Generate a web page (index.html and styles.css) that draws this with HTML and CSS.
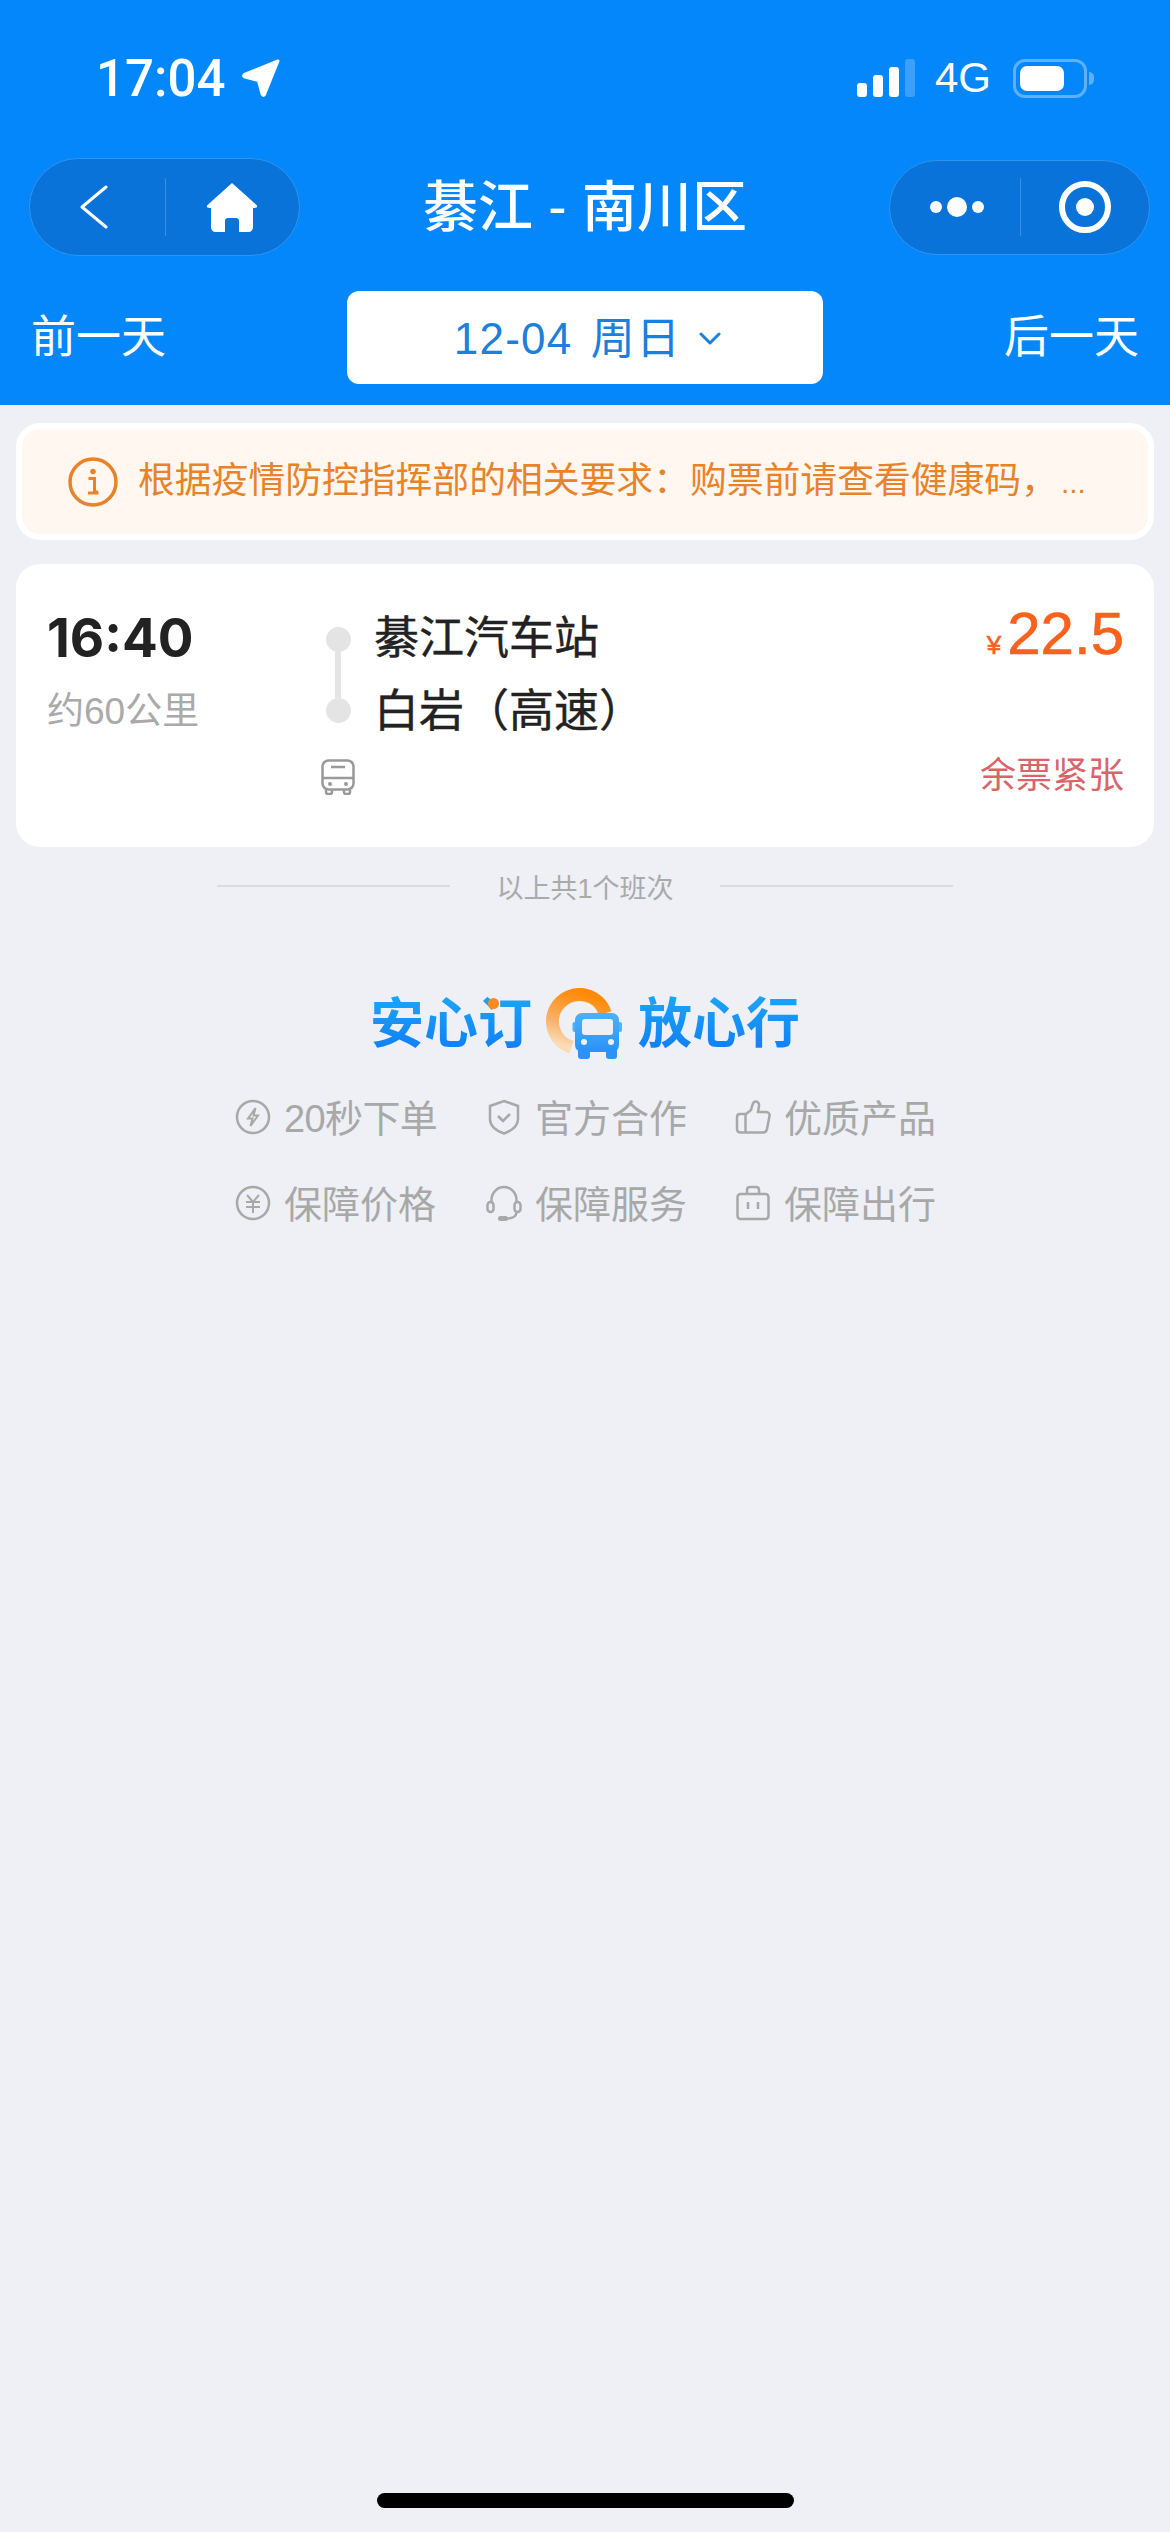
FILE: index.html
```html
<!DOCTYPE html>
<html lang="zh-CN">
<head>
  <meta charset="UTF-8">
  <title>綦江 - 南川区</title>
  <link rel="stylesheet" href="styles.css">
</head>
<body>
  <div class="page">
    <header class="top">
      <!-- Status bar -->
      <div class="status">
        <div class="clock">17:04</div>
        <svg class="locate" viewBox="0 0 40 40"><path d="M37 3 L23.5 36.5 Q22 38.500 21 36 L17.500 22.500 L4 19 Q1.500 18 3.500 16.500 Z" fill="#fff" stroke="#fff" stroke-width="3" stroke-linejoin="round"/></svg>
        <div class="signal">
          <span class="bar bar-1"></span>
          <span class="bar bar-2"></span>
          <span class="bar bar-3"></span>
          <span class="bar bar-4"></span>
        </div>
        <div class="net">4G</div>
        <div class="battery"><span class="battery-fill"></span></div>
        <span class="battery-nub"></span>
      </div>

      <!-- Nav bar -->
      <div class="nav">
        <div class="pill pill-left">
          <div class="pill-cell">
            <svg class="icon-back" viewBox="0 0 28 44"><path d="M26 2 L2 22 L26 42" fill="none" stroke="#fff" stroke-width="3" stroke-linecap="round" stroke-linejoin="round"/></svg>
          </div>
          <div class="pill-cell pill-cell-line">
            <svg class="icon-home" viewBox="0 0 52 50"><path d="M26 1 L50.500 23 Q52.500 26 48 26 H47 V45 Q47 50 42 50 H33 V39 Q33 36 30 36 H22 Q19 36 19 39 V50 H10 Q5 50 5 45 V26 H4 Q-.5 26 1.500 23 Z" fill="#fff"/></svg>
          </div>
        </div>
        <h1 class="title">綦江 - 南川区</h1>
        <div class="pill pill-right">
          <div class="pill-cell">
            <div class="dots"><span class="dot"></span><span class="dot dot-big"></span><span class="dot"></span></div>
          </div>
          <div class="pill-cell pill-cell-line">
            <div class="target"><span class="target-core"></span></div>
          </div>
        </div>
      </div>

      <!-- Date switcher -->
      <div class="dates">
        <div class="day-link">前一天</div>
        <div class="date-box">
          <span class="date-label">12-04 周日</span>
          <svg class="date-arrow" viewBox="0 0 22 14"><path d="M2 2 L11 11 L20 2" fill="none" stroke="#1c7fd9" stroke-width="3" stroke-linecap="round" stroke-linejoin="round"/></svg>
        </div>
        <div class="day-link day-link-next">后一天</div>
      </div>
    </header>

    <main class="content">
      <div class="notice">
        <svg class="notice-icon" viewBox="0 0 50 50">
          <circle cx="25" cy="25" r="23" fill="none" stroke="#e8832a" stroke-width="3.500"/>
          <circle cx="25" cy="14.500" r="2.800" fill="#e8832a"/>
          <path d="M20.500 21.500 H26.500 V35 H30 M20 36 H30.500" fill="none" stroke="#e8832a" stroke-width="3"/>
        </svg>
        <div class="notice-text">根据疫情防控指挥部的相关要求：购票前请查看健康码，<span class="notice-more">...</span></div>
      </div>

      <div class="trip">
        <div class="trip-time">
          <div class="depart">16:40</div>
          <div class="distance">约60公里</div>
        </div>
        <div class="trip-line">
          <div class="line-track">
            <span class="line-dot"></span>
            <span class="line-bar"></span>
            <span class="line-dot"></span>
          </div>
          <svg class="icon-bus" viewBox="0 0 34 36">
            <rect x="1.500" y="1.500" width="31" height="29" rx="6" fill="none" stroke="#999" stroke-width="2.500"/>
            <path d="M10 8 H24 M1.500 19 H32.500 M5 31 V33 Q5 35 7 35 H9 Q11 35 11 33 V31 M23 31 V33 Q23 35 25 35 H27 Q29 35 29 33 V31" fill="none" stroke="#999" stroke-width="2.500"/>
            <circle cx="9" cy="25" r="2" fill="#999"/>
            <circle cx="25" cy="25" r="2" fill="#999"/>
          </svg>
        </div>
        <div class="stations">
          <div class="station">綦江汽车站</div>
          <div class="station">白岩（高速）</div>
        </div>
        <div class="trip-side">
          <div class="price"><span class="yen">¥</span>22.5</div>
          <div class="stock">余票紧张</div>
        </div>
      </div>

      <div class="count">
        <span class="count-line"></span>
        <span class="count-text">以上共1个班次</span>
        <span class="count-line"></span>
      </div>

      <div class="brand">
        <div class="brand-text">安心订<span class="brand-dot"></span></div>
        <svg class="brand-logo" viewBox="0 0 76 72">
          <defs>
            <linearGradient id="ring" x1="0.600" y1="0" x2="0.300" y2="1">
              <stop offset="0" stop-color="#ff8a0a"/>
              <stop offset="0.600" stop-color="#f9b066"/>
              <stop offset="1" stop-color="#fbdcb8"/>
            </linearGradient>
            <linearGradient id="coach" x1="0" y1="0" x2="0" y2="1">
              <stop offset="0" stop-color="#4db2f7"/>
              <stop offset="1" stop-color="#2a92f8"/>
            </linearGradient>
          </defs>
          <path d="M59.200 25.200 A27 27 0 1 0 25.600 59.300" fill="none" stroke="url(#ring)" stroke-width="13"/>
          <rect x="26.500" y="34" width="4" height="10" rx="2" fill="#4db2f7"/>
          <rect x="72" y="34" width="4" height="10" rx="2" fill="#4db2f7"/>
          <rect x="29" y="25" width="44" height="39" rx="7" fill="url(#coach)"/>
          <rect x="36" y="31" width="31" height="16" rx="3" fill="#eef0f6"/>
          <rect x="32" y="60" width="12" height="11" rx="3" fill="#2a92f8"/>
          <rect x="60" y="60" width="11" height="11" rx="3" fill="#2a92f8"/>
          <circle cx="38" cy="54" r="3" fill="#eef0f6"/>
          <circle cx="65" cy="54" r="3" fill="#eef0f6"/>
        </svg>
        <div class="brand-text">放心行</div>
      </div>

      <div class="perks">
        <div class="perk">
          <svg class="perk-icon" viewBox="0 0 36 36">
            <circle cx="18" cy="18" r="16" class="ln"/>
            <path d="M20.500 9 L13 19.500 H17.500 L15.500 27 L23 16.500 H18.500 Z" class="ln-thin"/>
          </svg>
          <span class="perk-tight">20秒下单</span>
        </div>
        <div class="perk">
          <svg class="perk-icon" viewBox="0 0 36 36">
            <path d="M18 2 L32 7 V20 C32 27 25 32 18 34.500 C11 32 4 27 4 20 V7 Z" class="ln"/>
            <path d="M12 17 L17 22 L24 15" class="ln"/>
          </svg>
          <span>官方合作</span>
        </div>
        <div class="perk">
          <svg class="perk-icon" viewBox="0 0 36 36">
            <path d="M11 15 L16 11 C17 8 17 5 19 3 C22 1.500 24.500 4 24 7 L23 13 H31 C33.500 13 35 15 34.500 17 L32 30 C31.500 32.500 30 33.500 28 33.500 H6 C3 33.500 2 32.500 2 30 V18 C2 16 3 15 5 15 Z" class="ln"/>
            <path d="M10.500 15 V33" class="ln"/>
          </svg>
          <span>优质产品</span>
        </div>
        <div class="perk">
          <svg class="perk-icon" viewBox="0 0 36 36">
            <circle cx="18" cy="18" r="16" class="ln"/>
            <path d="M12 10 L18 17 L24 10 M11 17 H25 M11 22 H25 M18 17 V28" class="ln-thin"/>
          </svg>
          <span>保障价格</span>
        </div>
        <div class="perk">
          <svg class="perk-icon" viewBox="0 0 36 36">
            <path d="M5.500 17 V15 A12.500 13 0 0 1 30.500 15 V17" class="ln"/>
            <rect x="1.500" y="17" width="6" height="10" rx="3" class="ln"/>
            <rect x="28.500" y="17" width="6" height="10" rx="3" class="ln"/>
            <path d="M30.500 27 C30.500 32 27 33.500 20 33.500" class="ln"/>
            <rect x="12" y="31" width="10" height="5" rx="2.500" fill="#a8a8a8"/>
          </svg>
          <span>保障服务</span>
        </div>
        <div class="perk">
          <svg class="perk-icon" viewBox="0 0 36 36">
            <rect x="2.500" y="9" width="31" height="25" rx="3" class="ln"/>
            <path d="M12 9 V5 C12 3 13 2 15 2 H21 C23 2 24 3 24 5 V9 M13 17 V24 M23 17 V24" class="ln"/>
          </svg>
          <span>保障出行</span>
        </div>
      </div>
    </main>

    <div class="home-area"><span class="home-bar"></span></div>
  </div>
</body>
</html>
```

FILE: styles.css
```css
* {
  box-sizing: border-box;
}

body {
  margin: 0;
  font-family: "Liberation Sans", "Noto Sans CJK SC", sans-serif;
  background: #eef0f6;
}

.page {
  display: flex;
  flex-direction: column;
  width: 1170px;
  height: 2532px;
  overflow: hidden;
}

/* Blue header */
.top {
  height: 405px;
  padding-top: 58px;
  background: #0387fa;
  color: #fff;
}

.status {
  display: flex;
  align-items: center;
  height: 40px;
  padding-left: 96px;
}

.clock {
  width: 140px;
  margin-top: 2px;
  font-family: Roboto, sans-serif;
  font-size: 51px;
  font-weight: 500;
  line-height: 40px;
}

.locate {
  width: 40px;
  height: 40px;
  margin-left: 5px;
}

.signal {
  display: flex;
  align-items: flex-end;
  gap: 6px;
  height: 37px;
  margin-left: 576px;
}

.bar {
  width: 10px;
  border-radius: 3px;
  background: #fff;
}

.bar-1 { height: 14px; }
.bar-2 { height: 22px; }
.bar-3 { height: 30px; }
.bar-4 { height: 38px; background: #3b9ffb; }

.net {
  margin-left: 20px;
  font-size: 42px;
  line-height: 40px;
}

.battery {
  width: 74px;
  height: 39px;
  margin-left: 22px;
  padding: 4px;
  border: 3px solid #5db0fc;
  border-radius: 12px;
}

.battery-fill {
  display: block;
  width: 44px;
  height: 100%;
  border-radius: 7px;
  background: #fff;
}

.battery-nub {
  width: 5px;
  height: 13px;
  margin-left: 2px;
  border-radius: 0 5px 5px 0;
  background: #5db0fc;
}

.nav {
  display: grid;
  grid-template-columns: 1fr auto 1fr;
  align-items: center;
  height: 98px;
  margin-top: 60px;
  padding: 0 20px;
}

.pill {
  display: grid;
  grid-template-columns: 1fr 1fr;
  align-items: center;
  border: 1px solid #2f95ee;
  border-radius: 50px;
  background: #0a73da;
}

.pill-left {
  width: 271px;
  height: 98px;
  margin-left: 9px;
}

.pill-right {
  width: 261px;
  height: 95px;
  justify-self: end;
}

.pill-cell {
  display: flex;
  justify-content: center;
  align-items: center;
  height: 58px;
}

.pill-cell-line {
  border-left: 1px solid #3a8fdf;
}

.icon-back {
  width: 28px;
  height: 44px;
  margin-right: 6px;
}

.icon-home {
  width: 52px;
  height: 50px;
}

.dots {
  display: flex;
  align-items: center;
  gap: 5px;
  margin-left: 4px;
}

.dot {
  width: 12px;
  height: 12px;
  border-radius: 50%;
  background: #fff;
}

.dot-big {
  width: 20px;
  height: 20px;
}

.target {
  display: flex;
  justify-content: center;
  align-items: center;
  width: 52px;
  height: 52px;
  border: 6px solid #fff;
  border-radius: 50%;
}

.target-core {
  width: 18px;
  height: 18px;
  border-radius: 50%;
  background: #fff;
}

.title {
  margin: 0;
  font-size: 55px;
  font-weight: 500;
  line-height: 60px;
}

.dates {
  display: grid;
  grid-template-columns: 1fr 476px 1fr;
  align-items: center;
  margin-top: 35px;
  padding: 0 31px;
}

.day-link {
  font-size: 45px;
  line-height: 60px;
}

.day-link-next {
  text-align: right;
}

.date-box {
  display: flex;
  justify-content: center;
  align-items: center;
  gap: 18px;
  height: 93px;
  padding-left: 5px;
  border-radius: 12px;
  background: #fff;
  color: #1c7fd9;
  font-size: 44px;
}

.date-label {
  margin-top: -5px;
  letter-spacing: 1.2px;
  word-spacing: 5px;
}

.date-arrow {
  width: 22px;
  height: 14px;
  margin-top: 2px;
}

/* Content */
.content {
  flex: 1;
  padding: 18px 16px 0;
}

.notice {
  display: flex;
  align-items: center;
  height: 117px;
  padding-left: 46px;
  border: 6px solid #fff;
  border-radius: 24px;
  background: #fff7f0;
}

.notice-icon {
  flex: none;
  width: 50px;
  height: 50px;
}

.notice-text {
  margin-left: 20px;
  color: #e8832a;
  font-size: 36.8px;
  line-height: 50px;
  white-space: nowrap;
}

.notice-more {
  margin-left: 3px;
  font-size: 30px;
}

.trip {
  display: flex;
  margin-top: 24px;
  padding: 38px 30px 51px 31px;
  border-radius: 24px;
  background: #fff;
}

.trip-time {
  width: 273px;
}

.depart {
  color: #222;
  font-family: Inter, sans-serif;
  font-size: 53px;
  font-weight: 700;
  line-height: 73px;
}

.distance {
  color: #aaa;
  font-size: 37px;
  line-height: 73px;
}

.trip-line {
  display: flex;
  flex-direction: column;
  align-items: center;
  width: 36px;
  padding-top: 25px;
}

.line-track {
  display: flex;
  flex-direction: column;
  align-items: center;
  height: 96px;
}

.line-dot {
  width: 25px;
  height: 25px;
  border-radius: 50%;
  background: #e4e4e4;
}

.line-bar {
  flex: 1;
  width: 6px;
  background: #e4e4e4;
}

.icon-bus {
  width: 34px;
  height: 36px;
  margin-top: 36px;
}

.stations {
  margin-left: 18px;
}

.station {
  color: #222;
  font-size: 45px;
  line-height: 73px;
  -webkit-text-stroke: 0.4px #222;
}

.trip-side {
  margin-left: auto;
  text-align: right;
}

.price {
  margin-top: -5px;
  color: #f9611c;
  font-size: 60px;
  line-height: 73px;
  -webkit-text-stroke: 0.6px #f9611c;
}

.yen {
  margin-right: 6px;
  font-size: 26px;
  line-height: 1;
}

.stock {
  margin-top: 86px;
  color: #d9646a;
  font-size: 36px;
  line-height: 40px;
}

.count {
  display: flex;
  justify-content: center;
  align-items: center;
  gap: 46px;
  height: 26px;
  margin-top: 26px;
}

.count-line {
  width: 233px;
  height: 2px;
  background: #dcdcdc;
}

.count-text {
  color: #aaa;
  font-size: 27px;
}

.brand {
  display: flex;
  justify-content: center;
  align-items: center;
  height: 72px;
  margin-top: 89px;
}

.brand-text {
  position: relative;
  background: linear-gradient(#1ca6f5, #0f7cfa);
  background-clip: text;
  -webkit-background-clip: text;
  color: transparent;
  font-size: 54px;
  font-weight: bold;
  line-height: 60px;
}

.brand-dot {
  position: absolute;
  top: 4px;
  left: 118px;
  width: 11px;
  height: 11px;
  border-radius: 50%;
  background: #ff8a1e;
}

.brand-logo {
  width: 76px;
  height: 72px;
  margin: 0 16px 0 14px;
}

.perks {
  display: grid;
  grid-template-columns: 251px 249px auto;
  row-gap: 36px;
  margin: 30px 0 0 219px;
}

.perk {
  display: flex;
  align-items: center;
  gap: 13px;
  height: 50px;
  color: #a8a8a8;
  font-size: 38px;
}

.perk-tight {
  letter-spacing: -0.6px;
}

.perk-icon {
  width: 36px;
  height: 36px;
  margin-top: 3px;
}

.ln {
  fill: none;
  stroke: #a8a8a8;
  stroke-width: 2.5;
}

.ln-thin {
  fill: none;
  stroke: #a8a8a8;
  stroke-width: 2;
}

.home-area {
  display: flex;
  justify-content: center;
  height: 39px;
}

.home-bar {
  width: 417px;
  height: 15px;
  border-radius: 8px;
  background: #000;
}
```
